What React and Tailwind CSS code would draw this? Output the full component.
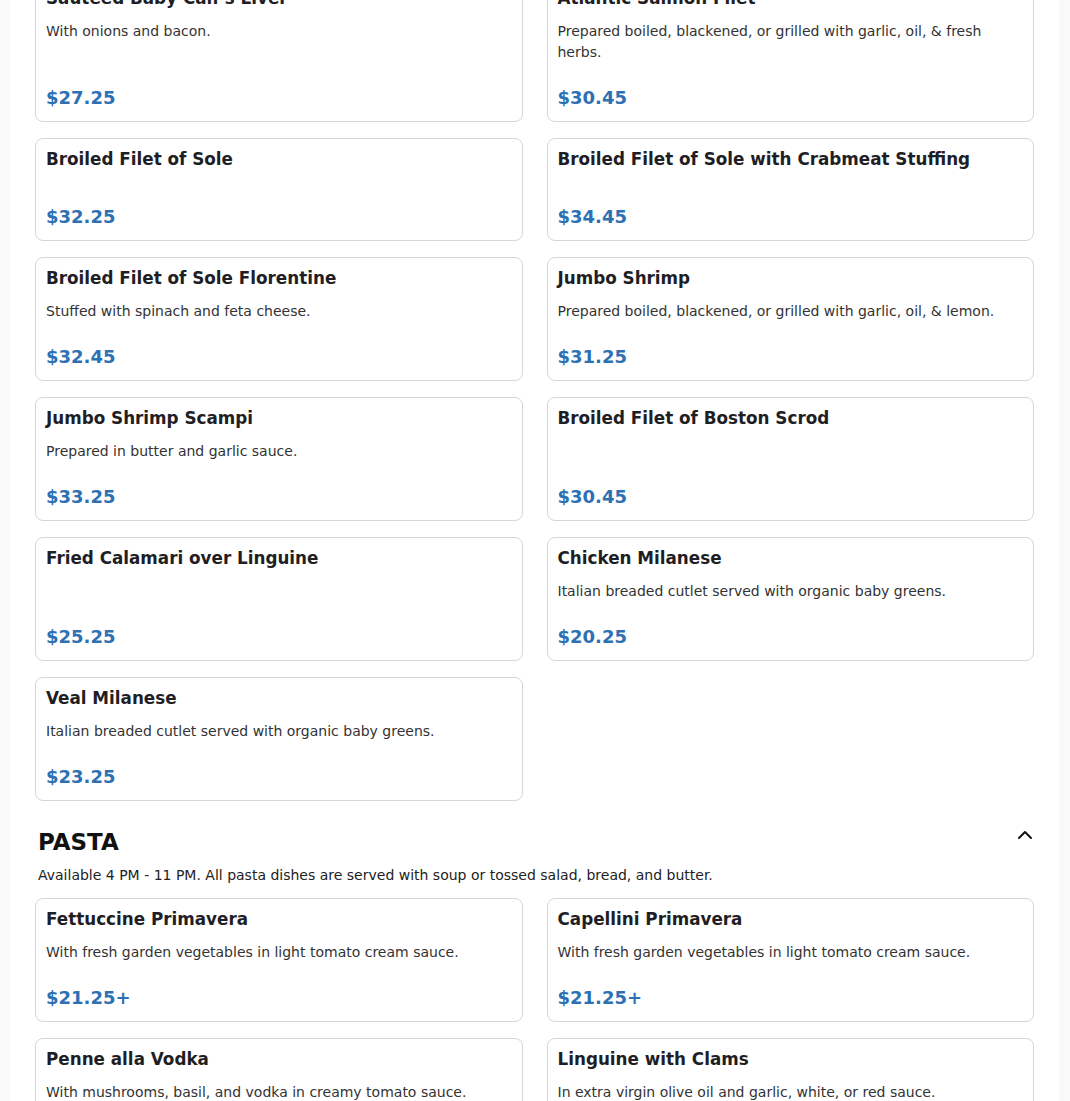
import { ChevronUp } from 'lucide-react';

const ENTREES = [
	{ name: "Sauteed Baby Calf's Liver", desc: 'With onions and bacon.', price: '$27.25' },
	{ name: 'Atlantic Salmon Filet', desc: 'Prepared boiled, blackened, or grilled with garlic, oil, & fresh herbs.', price: '$30.45' },
	{ name: 'Broiled Filet of Sole', price: '$32.25' },
	{ name: 'Broiled Filet of Sole with Crabmeat Stuffing', price: '$34.45' },
	{ name: 'Broiled Filet of Sole Florentine', desc: 'Stuffed with spinach and feta cheese.', price: '$32.45' },
	{ name: 'Jumbo Shrimp', desc: 'Prepared boiled, blackened, or grilled with garlic, oil, & lemon.', price: '$31.25' },
	{ name: 'Jumbo Shrimp Scampi', desc: 'Prepared in butter and garlic sauce.', price: '$33.25' },
	{ name: 'Broiled Filet of Boston Scrod', price: '$30.45' },
	{ name: 'Fried Calamari over Linguine', price: '$25.25' },
	{ name: 'Chicken Milanese', desc: 'Italian breaded cutlet served with organic baby greens.', price: '$20.25' },
	{ name: 'Veal Milanese', desc: 'Italian breaded cutlet served with organic baby greens.', price: '$23.25' },
];

const PASTA = [
	{ name: 'Fettuccine Primavera', desc: 'With fresh garden vegetables in light tomato cream sauce.', price: '$21.25+' },
	{ name: 'Capellini Primavera', desc: 'With fresh garden vegetables in light tomato cream sauce.', price: '$21.25+' },
	{ name: 'Penne alla Vodka', desc: 'With mushrooms, basil, and vodka in creamy tomato sauce.', price: '$21.25+' },
	{ name: 'Linguine with Clams', desc: 'In extra virgin olive oil and garlic, white, or red sauce.', price: '$23.25+' },
];

function MenuCard({ item }) {
	return (
		<div className="flex flex-col rounded-lg border border-[#d6d6d6] bg-white p-[10px]">
			<div className="flex-1">
				<h3 className="text-[16.8px] font-bold leading-[20px] text-[#1e1e24] mb-[13px]">{item.name}</h3>
				{item.desc && <p className="text-[14px] leading-[21px] text-[#333]">{item.desc}</p>}
			</div>
			<p className="mt-[21px] text-[18px] font-bold leading-[27px] text-[#2d70b3]">{item.price}</p>
		</div>
	);
}

export default function App() {
	return (
		<div className="h-[1101px] overflow-hidden bg-[#f9f9f9] font-['DejaVu_Sans',sans-serif]">
			<div className="ml-[10px] mr-[11px] min-h-full bg-white px-[25px]">
				<div className="-mt-[23px]">

					{/* Entrees (scrolled) */}
					<div className="grid grid-cols-2 gap-x-6 gap-y-4">
						{ENTREES.map((item) => <MenuCard key={item.name} item={item} />)}
					</div>

					{/* Pasta section */}
					<div className="mt-[25px] pl-[3px]">
						<div className="flex items-start justify-between">
							<h2 className="text-[23px] font-bold leading-[33px] text-[#111]">PASTA</h2>
							<ChevronUp size={24} strokeWidth={2} className="-mt-[3px] -mr-[3px] text-[#111]" />
						</div>
						<p className="mt-[6px] text-[14px] leading-[21px] text-[#222]">
							Available 4 PM - 11 PM. All pasta dishes are served with soup or tossed salad, bread, and butter.
						</p>
					</div>
					<div className="mt-[12px] grid grid-cols-2 gap-x-6 gap-y-4">
						{PASTA.map((item) => <MenuCard key={item.name} item={item} />)}
					</div>

				</div>
			</div>
		</div>
	);
}
